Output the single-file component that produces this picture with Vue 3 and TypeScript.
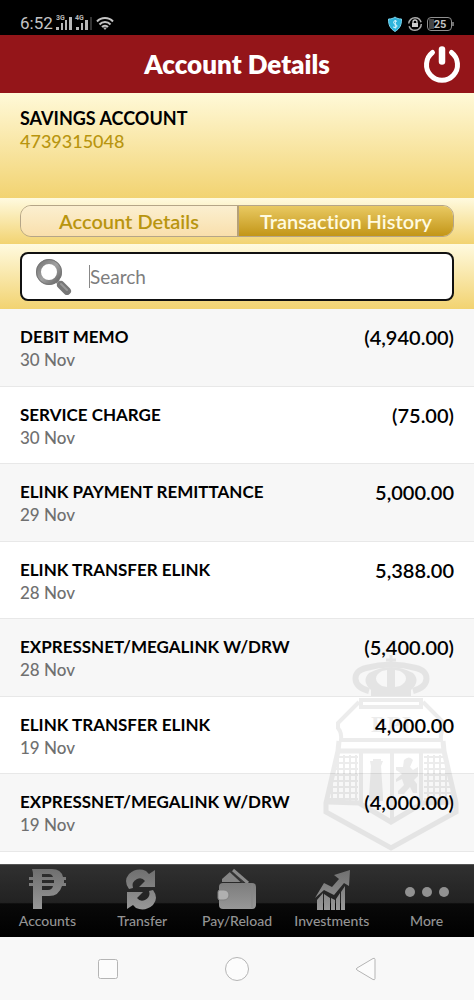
<script setup lang="ts">
interface Transaction {
  title: string
  date: string
  amount: string
}

const transactions: Transaction[] = [
  { title: 'DEBIT MEMO', date: '30 Nov', amount: '(4,940.00)' },
  { title: 'SERVICE CHARGE', date: '30 Nov', amount: '(75.00)' },
  { title: 'ELINK PAYMENT REMITTANCE', date: '29 Nov', amount: '5,000.00' },
  { title: 'ELINK TRANSFER ELINK', date: '28 Nov', amount: '5,388.00' },
  { title: 'EXPRESSNET/MEGALINK W/DRW', date: '28 Nov', amount: '(5,400.00)' },
  { title: 'ELINK TRANSFER ELINK', date: '19 Nov', amount: '4,000.00' },
  { title: 'EXPRESSNET/MEGALINK W/DRW', date: '19 Nov', amount: '(4,000.00)' },
]
</script>

<template>
  <div class="screen">
    <div class="status">
      <div class="status-group">
        <span class="clock">6:52</span>
        <svg width="62" height="18" viewBox="0 0 62 18" fill="#b8b8b8" aria-hidden="true">
          <text x="0" y="6" class="net">3G</text>
          <path d="M0 13h3v3H0zM5 9h2v7H5zM9 6h2v10H9zM13 3h3v13h-3z" />
          <text x="19" y="6" class="net">4G</text>
          <path d="M20 13h3v3h-3zM25 9h2v7h-2zM29 6h3v10h-3z" />
          <path d="M34 3h2v13h-2z" fill="#333" />
          <g fill="none" stroke="#c4c4c4" stroke-width="2">
            <path d="M41 7.500a11 11 0 0 1 16 0M43.500 10.500a7.500 7.500 0 0 1 11 0M46 13a4 4 0 0 1 6 0" />
          </g>
          <path d="M47 13.500h4L49 16z" />
        </svg>
      </div>
      <div class="status-group">
        <svg width="66" height="16" viewBox="0 0 66 16" aria-hidden="true">
          <path d="M7 1c2 1.500 4 2 6.500 2 0 6-1.500 9.500-6.500 12.500C2 12.500.5 9 .5 3 3 3 5 2.500 7 1z" fill="#2eb4dc" stroke="#7cd5ef" />
          <path d="M9 5.500C8 4.500 5.500 4.500 5.500 6.500S9 8 9 10s-3 2-4 .8M7.300 4v8.500" fill="none" stroke="#d5f4ff" />
          <circle cx="27" cy="8" r="6.300" fill="none" stroke="#aaa" stroke-width="1.500" stroke-dasharray="17 2.800" />
          <path d="M24 7h6v4h-6z" fill="#ccc" />
          <path d="M25 7V6a2 2 0 0 1 4 0v1" fill="none" stroke="#ccc" stroke-width="1.300" />
          <rect x="39.500" y="1.500" width="24" height="13" rx="3.500" fill="none" stroke="#909090" />
          <path d="M41 3h5v10h-5z" fill="#444" />
          <path d="M65 6v4" stroke="#909090" stroke-width="1.500" />
          <text x="52" y="12" text-anchor="middle" class="battery">25</text>
        </svg>
      </div>
    </div>

    <header class="header">
      <h1>Account Details</h1>
      <button class="power" type="button" aria-label="Log out">
        <svg width="38" height="38" viewBox="0 0 38 38" fill="none" stroke="#fff" stroke-linecap="round">
          <path d="M9.500 7.500a15.500 15.500 0 1 0 19 0" stroke-width="5" />
          <path d="M19 4.500v12" stroke-width="6.500" />
        </svg>
      </button>
    </header>

    <section class="account">
      <h2>SAVINGS ACCOUNT</h2>
      <p>4739315048</p>
    </section>

    <div class="segments">
      <div class="segment-box">
        <button type="button">Account Details</button>
        <button type="button" class="active" aria-pressed="true">Transaction History</button>
      </div>
    </div>

    <div class="search">
      <label class="search-box">
        <svg width="36" height="36" viewBox="0 0 36 36" fill="none" aria-hidden="true">
          <defs>
            <linearGradient id="lens" x1="0" y1="0" x2="1" y2="1">
              <stop offset="0" stop-color="#777" />
              <stop offset=".5" stop-color="#a2a2a2" />
              <stop offset="1" stop-color="#666" />
            </linearGradient>
          </defs>
          <path d="M21 22l4 4" stroke="#999" stroke-width="4" />
          <path d="M25 26l6 6" stroke="#777" stroke-width="8" stroke-linecap="round" />
          <path d="M25 25l6 6" stroke="#999" stroke-width="2" stroke-linecap="round" />
          <circle cx="13" cy="13" r="10.500" stroke="url(#lens)" stroke-width="5" />
          <circle cx="13" cy="13" r="12.500" stroke="#777" />
        </svg>
        <span class="caret"></span>
        <input type="text" placeholder="Search" aria-label="Search" />
      </label>
    </div>

    <main class="history">
      <ul>
        <li v-for="(item, index) in transactions" :key="index">
          <div class="detail">
            <h3>{{ item.title }}</h3>
            <p>{{ item.date }}</p>
          </div>
          <span class="amount">{{ item.amount }}</span>
        </li>
      </ul>
      <svg class="crest" width="144" height="200" viewBox="0 0 144 200" fill="none" stroke="#000" aria-hidden="true">
        <defs>
          <pattern id="bricks" width="6" height="6" patternUnits="userSpaceOnUse">
            <path d="M0 0h6v2H2v4H0z" fill="#000" stroke="none" />
          </pattern>
        </defs>
        <path d="M72 1v9M67 6h10" stroke-width="3" />
        <path d="M50 37C32 32 33 17 47 14q25-7 50 0c14 3 15 18-3 23" stroke-width="6" />
        <path fill="#000" stroke="none" fill-rule="evenodd" d="M50 19q22-12 44 0 8 8-2 17v6H52v-6q-10-9-2-17zM63 17c-8 4-8 11 0 15l5 1V16zM81 17c8 4 8 11 0 15l-5 1V16z" />
        <path d="M42 46h60v7H42zM40 48L19 69v5q4 5 3 12h100q-1-7 3-12v-5l-21-21" stroke-width="4" />
        <text x="72" y="78" text-anchor="middle" class="crest-name">BPI</text>
        <path d="M20 97h104" stroke-width="5" />
        <path d="M20 87l-1 10L7 149v9l65 36 65-36v-9L125 97l-1-10" stroke-width="5" />
        <path d="M19 101h20v47l-30-2zM105 101h20l9 45-29 2z" fill="url(#bricks)" stroke="none" />
        <path d="M9 148l31 1 32 19 32-19 31-1" stroke-width="5" />
        <path d="M42 98v52M102 98v52M73 98v68" stroke-width="4" />
        <path d="M51 107h3v-2h8v2h2l-2 5 2 30v5H50v-5l2-30z" fill="#000" stroke="none" />
        <path d="M85 106q5-5 9 0l-3 7 3 3 5-3v9l-4 4 3 4v9h-4l-3-6-6 7h-6v-3l6-6-2-6-6 3v-3l6-5-6-4v-3h7z" fill="#000" stroke="none" />
      </svg>
    </main>

    <nav class="tabs" aria-label="Main">
      <a href="#accounts">
        <svg width="46" height="44" viewBox="0 0 46 44" aria-hidden="true">
          <defs>
            <linearGradient id="metal" x1="0" y1="0" x2="0" y2="44" gradientUnits="userSpaceOnUse">
              <stop offset="0" stop-color="#6d6d6d" />
              <stop offset="1" stop-color="#999" />
            </linearGradient>
          </defs>
          <path fill="url(#metal)" fill-rule="evenodd" d="M8 2h20q9 0 11 8h3v3h-2v3h2v3h-4q-3 10-13 10h-7v13H9V19H5v-3h4v-3H5v-3h4V7q0-2-1-5zM18 7v3h11q-1-3-4-3zm0 6v3h12v-3zm0 6v4h6q4 0 5-4z" />
        </svg>
        <span>Accounts</span>
      </a>
      <a href="#transfer">
        <svg width="46" height="44" viewBox="0 0 46 44" fill="url(#metal)" aria-hidden="true">
          <path d="M10 22Q4 14 10 7q8-7 17-3l3 3 6-4v17H20l6-6q-3-4-8-2-6 3-4 9z" />
          <path d="M34 23q6 8 0 15-8 7-17 3l-3-3-6 4V25h16l-6 6q3 4 8 2 6-3 4-9z" />
        </svg>
        <span>Transfer</span>
      </a>
      <a href="#pay">
        <svg width="46" height="44" viewBox="0 0 46 44" aria-hidden="true">
          <path fill="#858585" d="M8 12L17 4l12 11H8z" />
          <path d="M16 4l13 12" stroke="#333" stroke-width="2" />
          <path d="M19 3l15 13" stroke="#8a8a8a" stroke-width="3" />
          <rect x="5" y="16" width="37" height="26" rx="4" fill="url(#metal)" />
          <path d="M38 17v24" stroke="#858585" />
          <path d="M4 25q0-2 2-2h4a5 5 0 0 1 0 10H6q-2 0-2-2z" fill="#b0b0b0" stroke="#808080" />
        </svg>
        <span>Pay/Reload</span>
      </a>
      <a href="#investments">
        <svg width="46" height="44" viewBox="0 0 46 44" fill="url(#metal)" aria-hidden="true">
          <path d="M8 33l6-7v17H8zM15 27l6 4v12h-6zM22 31l4 2v10h-4zM27 32l4-6v17h-4zM32 25l4-6v24h-4z" />
          <path d="M6 31l9-15 8 4 7-8-5-4 16-5-1 16-5-3-10 12-10-5z" />
        </svg>
        <span>Investments</span>
      </a>
      <a href="#more">
        <svg width="46" height="44" viewBox="0 0 46 44" fill="#919191" aria-hidden="true">
          <circle cx="6" cy="25" r="5" /><circle cx="23" cy="25" r="5" /><circle cx="40" cy="25" r="5" />
        </svg>
        <span>More</span>
      </a>
    </nav>

    <div class="system">
      <button type="button" aria-label="Recent apps">
        <svg width="26" height="26" viewBox="0 0 26 26"><rect x="3.500" y="3.500" width="19" height="19" rx="2" /></svg>
      </button>
      <button type="button" aria-label="Home">
        <svg width="26" height="26" viewBox="0 0 26 26"><circle cx="13" cy="13" r="11.500" /></svg>
      </button>
      <button type="button" aria-label="Back">
        <svg width="26" height="26" viewBox="0 0 26 26"><path d="M4 12Q2.500 13 4 14L20 23.500q2 .8 2-1V3.500q0-1.800-2-1z" /></svg>
      </button>
    </div>
  </div>
</template>

<style>
body {
  margin: 0;
}
</style>

<style scoped>
* {
  box-sizing: border-box;
}

.screen {
  display: flex;
  flex-direction: column;
  min-height: 100vh;
  font-family: Lato, sans-serif;
  font-variant-ligatures: none;
  background: #fff;
}

h1, h2, h3, p, ul {
  margin: 0;
  padding: 0;
}

button {
  border: 0;
  padding: 0;
  background: none;
  font-family: inherit;
}

svg {
  display: block;
  flex: none;
}

.status {
  display: flex;
  justify-content: space-between;
  align-items: flex-end;
  height: 35px;
  padding: 0 20px 3px;
  background: #000;
  color: #c4c4c4;
}

.status-group {
  display: flex;
  align-items: center;
  gap: 3px;
}

.clock {
  font-family: Roboto, sans-serif;
  font-size: 17px;
  line-height: 16px;
}

.net {
  font: 700 7px Roboto, sans-serif;
}

.battery {
  font: 700 11px Roboto, sans-serif;
  fill: #c4c4c4;
}

.header {
  display: grid;
  grid-template-columns: 38px 1fr 38px;
  align-items: center;
  height: 58px;
  padding: 0 13px;
  background: #941519;
  color: #fff;
}

.header h1 {
  grid-column: 2;
  text-align: center;
  font-size: 26px;
  font-weight: 800;
  line-height: 32px;
}

.account {
  height: 105px;
  padding: 14px 20px;
  background: linear-gradient(#fff9d8, #f2d371);
}

.account h2 {
  font-size: 18px;
  font-weight: 700;
  line-height: 23px;
}

.account p {
  font-size: 18px;
  font-weight: 500;
  line-height: 23px;
  color: #b8950f;
}

.segments {
  padding: 7px 20px;
  background: linear-gradient(#fffadf, #f2d371);
}

.segment-box {
  display: grid;
  grid-template-columns: 1fr 1fr;
  height: 32px;
  border: 1px solid #b5a588;
  border-radius: 11px;
  overflow: hidden;
}

.segment-box button {
  font-size: 20px;
  font-weight: 600;
  line-height: 30px;
  font-variant-ligatures: none;
  color: #b8950f;
  background: linear-gradient(#fbefd0, #f9dfac);
}

.segment-box .active {
  border-left: 2px solid #b5a078;
  color: #fffbe0;
  background: linear-gradient(#e9c962, #c39618);
}

.search {
  padding: 8px 20px;
  background: linear-gradient(#fffadf, #f2d371);
}

.search-box {
  display: flex;
  align-items: center;
  height: 49px;
  padding: 0 14px;
  border: 2px solid #111;
  border-radius: 8px;
  background: #fff;
}

.caret {
  width: 1px;
  height: 23px;
  margin-left: 17px;
  background: #888;
}

.search-box input {
  flex: 1;
  min-width: 0;
  padding: 0;
  border: 0;
  outline: 0;
  background: none;
  font-family: inherit;
  font-size: 19px;
  line-height: 24px;
}

.search-box input::placeholder {
  color: #7d7d7d;
  opacity: 1;
}

.history {
  position: relative;
  flex: 1;
  display: grid;
  padding-bottom: 12px;
  background: #fff;
}

.history ul {
  display: grid;
  grid-auto-rows: 1fr;
  list-style: none;
}

.history li {
  display: flex;
  justify-content: space-between;
  padding: 16px 20px 14px;
  border-bottom: 1px solid #e8e8e8;
  background: #f7f7f7;
}

.history li:nth-child(even) {
  background: #fff;
}

.history h3 {
  font-size: 17px;
  font-weight: 700;
  line-height: 24px;
}

.history p {
  font-size: 17px;
  font-weight: 500;
  line-height: 22px;
  color: #707070;
}

.amount {
  font-size: 20px;
  font-weight: 600;
  line-height: 24px;
}

.crest {
  position: absolute;
  right: 11px;
  bottom: 10px;
  opacity: 0.07;
  pointer-events: none;
}

.crest-name {
  font: 700 24px "Liberation Serif", serif;
  fill: #000;
  stroke: none;
}

.tabs {
  display: grid;
  grid-template-columns: repeat(5, 1fr);
  height: 73px;
  border-top: 1px solid #555;
  background: linear-gradient(#303030, #222 52%, #090909 54%, #000);
}

.tabs a {
  display: flex;
  flex-direction: column;
  align-items: center;
  padding-top: 2px;
  color: #949494;
  text-decoration: none;
}

.tabs span {
  font-size: 14px;
  font-weight: 500;
  line-height: 20px;
}

.system {
  display: flex;
  justify-content: center;
  align-items: center;
  gap: 103px;
  height: 63px;
  background: #f8f8f8;
}

.system svg {
  fill: #fcfcfc;
  stroke: #b5b5b5;
}
</style>
